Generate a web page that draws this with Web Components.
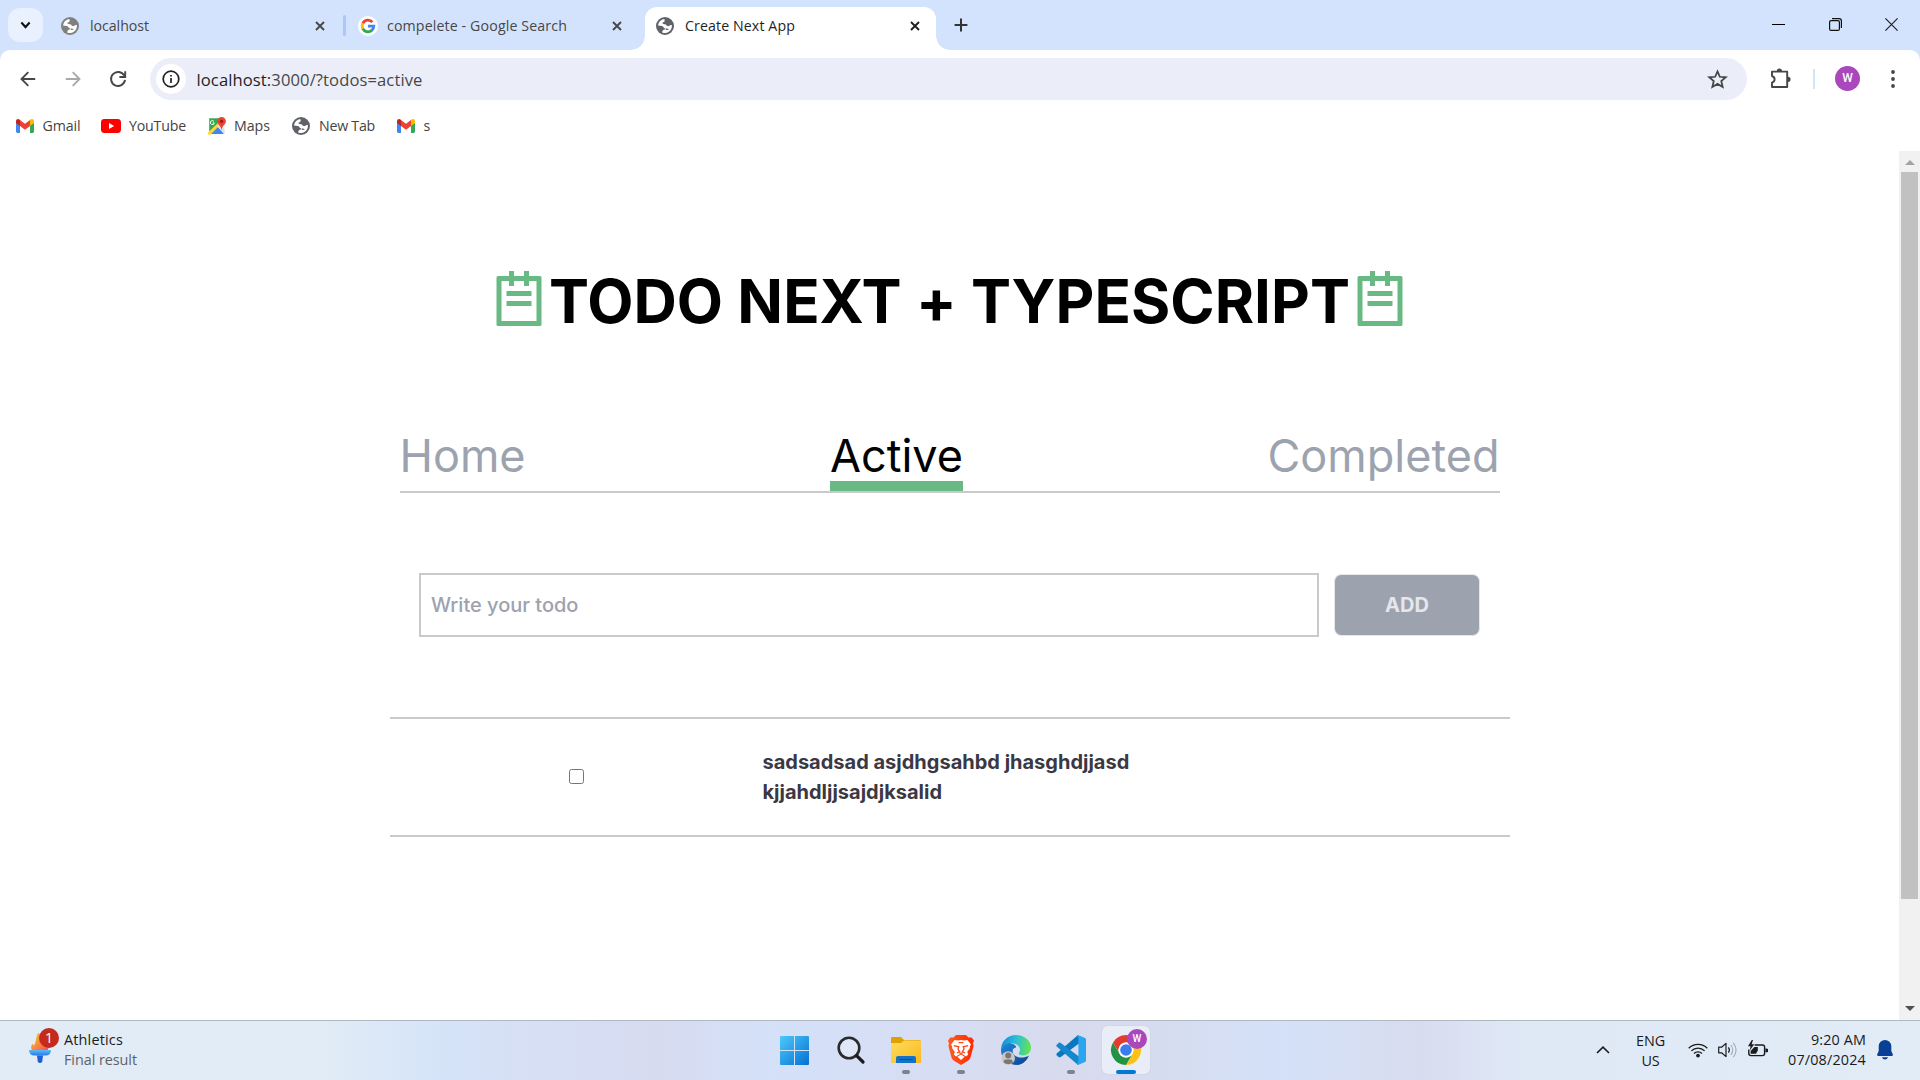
<!DOCTYPE html>
<html lang="en">
<head>
<meta charset="utf-8">
<title>Create Next App</title>
<style>
html,body{margin:0;height:100%;overflow:hidden;background:#fff}
body{font-family:"Open Sans","Noto Sans",sans-serif}
</style>
</head>
<body>
<desktop-screen></desktop-screen>
<script>
const define = (name, css, html, hook) => customElements.define(name, class extends HTMLElement {
  constructor() {
    super();
    const t = document.createElement('template');
    t.innerHTML = `<style>*{box-sizing:border-box}${css}</style>${html}`;
    this.attachShadow({ mode: 'open' }).append(t.content.cloneNode(true));
  }
  connectedCallback() { if (hook) hook(this, this.shadowRoot); }
});

const icons = {
  globe: ['0 0 18 18', '<circle cx="9" cy="9" r="9" fill="currentColor"/><path fill="#fff" d="M8.2 2A7 7 0 0 0 2 8.6C3.4 8.9 4.6 9 5.8 9.1C7.2 9.2 7.4 10.9 8.6 11.2C9.4 11.4 9.5 12.4 8.6 12.6C7.4 12.8 6.4 13.2 6.2 15.4A7 7 0 0 0 15.9 8.2C14.6 7.8 13.6 8.8 12.6 9.1C11.2 9.4 10.7 8.2 9.8 7.4C9 6.8 7.4 7.6 6.6 6.6C6 5.6 7.2 5.2 8 4.9C8.8 4.4 8.9 3 8.2 2z"/><path fill="currentColor" d="M9.6 11.8C10.8 11 12 11.6 13 12.6C11.8 13 10.6 13.2 9.8 12.8z"/>'],
  google: ['0 0 20 20', '<circle cx="10" cy="10" r="10" fill="#fff"/><g fill="none" stroke-width="2.9"><path stroke="#ea4335" d="M14.4 6.1A5.8 5.8 0 0 0 4.8 7.4"/><path stroke="#fbbc05" d="M4.8 7.3A5.8 5.8 0 0 0 4.8 12.7"/><path stroke="#34a853" d="M4.8 12.6A5.8 5.8 0 0 0 13.8 14.4"/><path stroke="#4285f4" d="M10 10.1H15.8A5.8 5.8 0 0 1 13.7 14.5"/></g>'],
  close: ['0 0 10 10', '<path d="M1 1L9 9M9 1L1 9" stroke="currentColor" stroke-width="1.9" fill="none"/>'],
  plus: ['0 0 14 14', '<path d="M7 .6V13.4M.6 7H13.4" stroke="currentColor" stroke-width="2" fill="none"/>'],
  down: ['0 0 12 8', '<path d="M1.5 1.5L6 6L10.5 1.5" stroke="currentColor" stroke-width="2.3" fill="none"/>'],
  min: ['0 0 13 13', '<path d="M0 6.5H13" stroke="#000" stroke-width="1"/>'],
  restore: ['0 0 13 13', '<rect x=".6" y="2.6" width="9.8" height="9.8" rx="1.5" fill="none" stroke="#111" stroke-width="1.2"/><path d="M3 .6H10Q12.4 .6 12.4 3V10" fill="none" stroke="#111" stroke-width="1.2"/>'],
  wclose: ['0 0 13 13', '<path d="M.4 .4L12.6 12.6M12.6 .4L.4 12.6" stroke="#222" stroke-width="1.2"/>'],
  back: ['0 0 16 16', '<path d="M15.2 8H2M8.3 1.2L1.5 8L8.3 14.8" stroke="currentColor" stroke-width="1.9" fill="none"/>'],
  reload: ['0 0 18 18', '<path d="M15.2 5.6A7 7 0 1 0 16 9.9M16.2 1.2V7H10.4" stroke="currentColor" stroke-width="1.9" fill="none"/>'],
  info: ['0 0 18 18', '<circle cx="9" cy="9" r="7.8" stroke="#222" stroke-width="1.7" fill="none"/><path d="M9 8V13M9 4.9V6.6" stroke="#222" stroke-width="1.7"/>'],
  star: ['0 0 20 20', '<path d="M10 2.3L12.2 7.4L17.9 7.9L13.6 11.6L14.9 17.1L10 14.2L5.1 17.1L6.4 11.6L2.1 7.9L7.8 7.4Z" stroke="#444746" stroke-width="1.7" fill="none"/>'],
  puzzle: ['0 0 21 21', '<path d="M2 3.6H17.2V19H2V14.6Q4.6 13.8 4.6 11.3T2 8Z" fill="none" stroke="#444746" stroke-width="1.9" stroke-linejoin="round"/><path d="M6.8 3A2.6 2.6 0 0 1 12 3ZM18 8.7A2.6 2.6 0 0 1 18 13.9Z" fill="#444746"/>'],
  dots: ['0 0 4 18', '<g fill="#444746"><circle cx="2" cy="2" r="1.9"/><circle cx="2" cy="9" r="1.9"/><circle cx="2" cy="16" r="1.9"/></g>'],
  gmail: ['0 0 18 14', '<path fill="#4285f4" d="M0 3V12.6Q0 14 1.4 14H4V6Z"/><path fill="#34a853" d="M14 6V14H16.6Q18 14 18 12.6V3Z"/><path fill="#fbbc04" d="M14 1.8V7L18 4V2.2C18 .2 15.8-.6 14 .8Z"/><path fill="#c5221f" d="M0 2.2V4L4 7V1L3.8 .8C2.2-.6 0 .2 0 2.2Z"/><path fill="#ea4335" d="M4 7V1L9 4.8L14 1V7L9 10.8Z"/>'],
  youtube: ['0 0 20 14', '<rect width="20" height="14" rx="3.4" fill="#f00"/><path d="M8 4L13.2 7L8 10Z" fill="#fff"/>'],
  maps: ['0 0 18 18', '<path d="M1.2 1.2H12V9L1.2 17Z" fill="#34a853"/><path d="M1 17L9.2 9L16 17Z" fill="#4285f4"/><path d="M0 15.6L11 5L13 7L2.6 17.6H0Z" fill="#fdd835"/><path d="M9.2 9.4L12 7L16.6 12V17Z" fill="#e0e0e0"/><path d="M5.9 4.4A2 2 0 1 0 6.3 6H4.6" stroke="#fff" stroke-width="1" fill="none"/><path d="M13.6 0A4.3 4.3 0 0 0 9.3 4.3C9.3 7.6 12.8 8.4 13.6 13C14.4 8.4 17.9 7.6 17.9 4.3A4.3 4.3 0 0 0 13.6 0Z" fill="#ea4335"/><circle cx="13.6" cy="4.2" r="1.5" fill="#8c1a11"/>'],
  note: ['0 0 24 24', '<path fill="#68b984" fill-rule="evenodd" d="M3.6 4H8V2H10V4H14V2H16V4H20.4Q21 4 21 4.6V23.4Q21 24 20.4 24H3.6Q3 24 3 23.4V4.6Q3 4 3.6 4ZM5 6V22H19V6H16V8H14V6H10V8H8V6ZM7 10H17V12H7ZM7 14H17V16H7Z"/>'],
  win: ['0 0 29 29', '<defs><linearGradient id="g" x1="0" y1="0" x2="1" y2="1"><stop stop-color="#4cc9fb"/><stop offset="1" stop-color="#0471d0"/></linearGradient></defs><path fill="url(#g)" d="M1 0H14V14H0V1Q0 0 1 0ZM15 0H28Q29 0 29 1V14H15ZM0 15H14V29H1Q0 29 0 28ZM15 15H29V28Q29 29 28 29H15Z"/>'],
  search: ['0 0 28 28', '<circle cx="12" cy="12" r="10.3" fill="rgba(255,255,255,.25)" stroke="#2b2b2e" stroke-width="2.6"/><path d="M19.6 19.6L26 26" stroke="#1b1b1b" stroke-width="3.2" stroke-linecap="round"/>'],
  folder: ['0 0 30 28', '<defs><linearGradient id="g" x1="0" y1="0" x2="1" y2="1"><stop stop-color="#ffdc60"/><stop offset="1" stop-color="#fbb91c"/></linearGradient></defs><path d="M0 2Q0 1 1 1H10L13 4H28Q30 4 30 6V12H0Z" fill="#dfa000"/><path d="M0 7H10L13 4.6H29Q30 4.6 30 6V26Q30 27 29 27H1Q0 27 0 26Z" fill="url(#g)"/><path d="M5 27V22Q5 20 7 20H23Q25 20 25 22V27Z" fill="#1273c8"/><path d="M9 23.5H21" stroke="#0a4f94" stroke-width="1.2" stroke-linecap="round"/>'],
  brave: ['0 0 26 30', '<defs><linearGradient id="g"><stop stop-color="#ff5a1f"/><stop offset="1" stop-color="#ff2a00"/></linearGradient></defs><path fill="url(#g)" d="M8 0H18L20.5 2.6L23.6 2.4L26 5.6L25 8.4L25.6 11L22.4 22.8Q21.6 24.6 20 25.8L13 30L6 25.8Q4.4 24.6 3.6 22.8L.4 11L1 8.4L0 5.6L2.4 2.4L5.5 2.6Z"/><path fill="#fff" d="M6.6 5L10 5.6L13 5L16 5.6L19.4 5L23 9.6L21.8 11.5L22 13L19.2 17L20.2 19.4L18 21.4L16.2 20.2L13 18.4L9.8 20.2L8 21.4L5.8 19.4L6.8 17L4 13L4.2 11.5L3 9.6Z"/><path fill="#fff" d="M13 19.6L16.6 21.8L13 25L9.4 21.8Z"/><path fill="none" stroke="#ff451a" stroke-width="1.3" d="M5.8 10.6L10.8 11.8L10 14L11.6 16.6L9 18M20.2 10.6L15.2 11.8L16 14L14.4 16.6L17 18M10.6 7.6H15.4M11 17.4L13 18.6L15 17.4"/>'],
  edge: ['0 0 30 30', '<defs><linearGradient id="a" x1="0" y1=".3" x2="1" y2=".4"><stop stop-color="#1689d8"/><stop offset=".5" stop-color="#2cc0d8"/><stop offset="1" stop-color="#66e34f"/></linearGradient><linearGradient id="b" x1="0" y1="0" x2="1" y2="1"><stop stop-color="#1b8ce0"/><stop offset="1" stop-color="#0c3f8c"/></linearGradient></defs><path fill="url(#b)" d="M.2 13C1.8 9 6 7.6 9.6 8.2C13 8.8 15.6 11 15 12.6C11.6 13 11 16 12.2 18.4C14.8 23.2 22.4 23.6 28 20.4C25.4 26.8 20.4 30 15 30A15 15 0 0 1 0 15Z"/><path fill="url(#a)" d="M.2 13C1 5.4 7.2 0 15 0C23.4 0 30 5.8 30 12.6C30 17.4 26.6 20.4 22.4 20.4C19.6 20.4 17.8 19.4 17.8 18.4C17.8 17.6 19 17 19 14.6C19 10.8 14.8 8 9.8 8C5.4 8 1.8 10 .2 13Z"/><circle cx="7.2" cy="23" r="6.8" fill="#c9c7c5"/><circle cx="7.2" cy="20.4" r="3" fill="#7b7775"/><path d="M2.6 27.6Q2.6 24.6 5 24.6H9.4Q11.8 24.6 11.8 27.6Q7.2 31 2.6 27.6Z" fill="#7b7775"/>'],
  code: ['0 0 30 30', '<path fill="#0b77bd" d="M22 0L25 7L4.4 22.2L2.8 22.3L.5 20Q0 19.2 .7 18.4Z"/><path fill="#1587cf" d="M4.4 7.8L25 23L22 30L.7 11.6Q0 10.8 .5 10L2.8 7.8Q3.6 7.3 4.4 7.8Z"/><path fill="#2ba5ee" d="M22 0L29 3Q30 3.5 30 4.6V25.4Q30 26.5 29 27L22 30Q21.3 30 21 29.2L22.4 27V3L21 .8Z"/>'],
  chrome: ['0 0 30 30', '<circle cx="15" cy="15" r="15" fill="#fff"/><path fill="#e33b2e" d="M2 7.5A15 15 0 0 1 28 7.5H15A7.5 7.5 0 0 0 8.5 18.75Z"/><path fill="#fbc116" d="M28 7.5A15 15 0 0 1 15 30L21.5 18.75A7.5 7.5 0 0 0 15 7.5Z"/><path fill="#229342" d="M15 30A15 15 0 0 1 2 7.5L8.5 18.75A7.5 7.5 0 0 0 21.5 18.75Z"/><circle cx="15" cy="15" r="7.4" fill="#fff"/><circle cx="15" cy="15" r="5.8" fill="#3b7ded"/>'],
  torch: ['0 0 22 32', '<defs><linearGradient id="a" x1="0" y1="0" x2="1" y2="1"><stop stop-color="#ffc21a"/><stop offset=".5" stop-color="#fb8d3c"/><stop offset="1" stop-color="#f4456a"/></linearGradient><linearGradient id="b" x1="0" y1="0" x2="0" y2="1"><stop stop-color="#5cc0f7"/><stop offset="1" stop-color="#2a78e8"/></linearGradient></defs><path fill="url(#a)" d="M9 0C14 3 20 7 20 13Q20 16 18.4 18.6H3Q1 15 3.6 11.4L5 13.4C7.4 10 6.6 5 9 0Z"/><path fill="url(#b)" d="M0 18H22Q22 24 16 24H6Q0 24 0 18Z"/><path fill="#1f5fd6" d="M8 24H14L13.2 31Q11 33 8.8 31Z"/>'],
  up: ['0 0 14 8', '<path d="M1 7L7 1.2L13 7" stroke="#1b1b1b" stroke-width="1.6" fill="none"/>'],
  wifi: ['0 0 20 16', '<g fill="none" stroke="#1b1b1b" stroke-width="1.3"><path d="M.7 6.2A13 13 0 0 1 19.3 6.2M3.4 8.9A9.2 9.2 0 0 1 16.6 8.9M6 11.5A5.6 5.6 0 0 1 14 11.5"/></g><circle cx="10" cy="13.6" r="1.9" fill="#1b1b1b"/>'],
  sound: ['0 0 20 16', '<path d="M.7 5.2H3.6L8 1.4V14.6L3.6 10.8H.7Z" fill="none" stroke="#1b1b1b" stroke-width="1.2" stroke-linejoin="round"/><path d="M10.4 5.4Q12.4 8 10.4 10.6" fill="none" stroke="#1b1b1b" stroke-width="1.2"/><path d="M12.8 3Q16.8 8 12.8 13M15.2 .8Q21 8 15.2 15.2" fill="none" stroke="#a3abb5" stroke-width="1.1"/>'],
  battery: ['0 0 20 18', '<path d="M6.6 5H14.4Q16.6 5 16.6 7V13.6Q16.6 15.6 14.4 15.6H3Q.8 15.6 .8 13.6V9.6" fill="none" stroke="#1b1b1b" stroke-width="1.4"/><path d="M17.4 8.2L20 9V12L17.4 12.6Z" fill="#1b1b1b"/><path d="M2.6 13.8V11L6.4 7H9.8V10.6L8 13.8Z" fill="#1b1b1b"/><path d="M3.8 0L0 6.2H2.6L1.8 10.4L6.2 4.2H3.6L5 0Z" fill="#1b1b1b"/>'],
  bell: ['0 0 16 20', '<path fill="#0a3f96" d="M8 0A6.3 6.3 0 0 0 1.7 6.3V11L.1 14.6Q-.2 16 1.2 16H14.8Q16.2 16 15.9 14.6L14.3 11V6.3A6.3 6.3 0 0 0 8 0ZM5 17.2H11Q10.4 19.4 8 19.4T5 17.2Z"/>']
};

define('ui-icon', ':host{display:block;flex:none}svg{display:block;width:100%;height:100%;overflow:visible}', '<svg preserveAspectRatio="none"></svg>', (el, root) => {
  const [box, art] = icons[el.getAttribute('name')];
  const svg = root.querySelector('svg');
  svg.setAttribute('viewBox', box);
  svg.innerHTML = art;
  el.style.width = el.getAttribute('w') + 'px';
  el.style.height = el.getAttribute('h') + 'px';
});

define('browser-tab', `
  :host{display:flex;align-items:center;height:43px;color:#474747;position:relative;font-size:14.2px}
  :host([active]){background:#fff;border-radius:12px 12px 0 0;color:#1f1f1f}
  :host([active])::before,:host([active])::after{content:"";position:absolute;bottom:0;width:14px;height:14px}
  :host([active])::before{left:-14px;background:radial-gradient(circle at 0 0,transparent 13.5px,#fff 14px)}
  :host([active])::after{right:-14px;background:radial-gradient(circle at 100% 0,transparent 13.5px,#fff 14px)}
  ui-icon{margin-left:auto;margin-top:-6px}::slotted(*){margin-top:-6px}`,
  '<slot></slot><ui-icon name="close" w="10" h="10"></ui-icon>');

define('tab-strip', `
  :host{display:flex;height:50px;background:#d3e3fd;padding-top:7px;color:#333}
  .list{width:35px;height:34px;margin:1px 0 0 8px;border-radius:12px;background:#e9f0fe;display:flex;align-items:center;justify-content:center;color:#111}
  .t1{width:264px;margin-left:18px;gap:11px;padding-right:0}
  .sep{width:3px;height:21px;border-radius:2px;background:#a8c7fa;margin:8px 12px 0 18px}
  .t2{width:264px;gap:9px}
  .t3{width:291px;margin-left:23px;padding:0 16px 0 11px;gap:11px}
  .plus{margin:11px 0 0 18px}
  .win{margin-left:auto;display:flex;gap:43px;padding:11px 22px 0 0}
  .win :first-child{margin-right:1px}`,
  `<div class="list"><ui-icon name="down" w="11" h="8"></ui-icon></div>
  <browser-tab class="t1"><ui-icon name="globe" w="18" h="18" style="color:#80807f"></ui-icon><fit-text w="59">localhost</fit-text></browser-tab>
  <div class="sep"></div>
  <browser-tab class="t2"><ui-icon name="google" w="20" h="20"></ui-icon><fit-text w="180">compelete - Google Search</fit-text></browser-tab>
  <browser-tab class="t3" active><ui-icon name="globe" w="18" h="18" style="color:#5f6368"></ui-icon><fit-text w="110">Create Next App</fit-text></browser-tab>
  <ui-icon class="plus" name="plus" w="14" h="14"></ui-icon>
  <div class="win"><ui-icon name="min" w="13" h="13"></ui-icon><ui-icon name="restore" w="13" h="13"></ui-icon><ui-icon name="wclose" w="13" h="13"></ui-icon></div>`);

define('browser-toolbar', `
  :host{display:block;background:#d3e3fd}
  .bar{display:flex;align-items:center;height:58px;background:#fff;border-radius:10px 10px 0 0;padding:0 25px 0 20px;color:#474747}
  .omni{width:1597px;height:42px;border-radius:21px;background:#ebeef8;display:flex;align-items:center;padding:0 19px 0 6px;margin-left:23.5px}
  .info{width:30px;height:30px;border-radius:50%;background:#fff;display:flex;align-items:center;justify-content:center;margin-right:10.5px}
  .url{font-size:16.6px;color:#474747}.url b{font-weight:400;color:#1f1f1f}
  .sep{width:2px;height:20px;background:#d3e3fd;margin:0 20px 0 22px}
  .me{width:25px;height:25px;border-radius:50%;background:#ab47bc;color:#fff;font:500 12px/25px Roboto,sans-serif;text-align:center;margin:-1px 30.5px 0 0}`,
  `<div class="bar"><ui-icon name="back" w="16" h="16"></ui-icon>
  <ui-icon name="back" w="16" h="16" style="margin-left:29px;transform:scaleX(-1);color:#a9a9a9"></ui-icon>
  <ui-icon name="reload" w="18" h="18" style="margin-left:27.5px"></ui-icon>
  <div class="omni"><div class="info"><ui-icon name="info" w="18" h="18"></ui-icon></div><fit-text class="url" w="226"><b>localhost:</b>3000/?todos=active</fit-text><ui-icon name="star" w="21" h="21" style="margin-left:auto"></ui-icon></div>
  <ui-icon name="puzzle" w="21" h="21" style="margin:-1px 0 0 23px"></ui-icon><div class="sep"></div><div class="me">W</div><ui-icon name="dots" w="4" h="18"></ui-icon></div>`);

define('bookmark-link', ':host{display:flex;align-items:center;height:24px;font-size:14.2px;color:#444}::slotted(:last-child){margin-top:-1px}',
  '<slot></slot>');
define('bookmark-bar', ':host{display:flex;background:#fff;height:43px;padding:6px 0 0 16px}bookmark-link{gap:8.5px}',
  `<bookmark-link style="width:85px"><ui-icon name="gmail" w="18" h="14"></ui-icon><fit-text w="38">Gmail</fit-text></bookmark-link>
  <bookmark-link style="width:107px;gap:8px"><ui-icon name="youtube" w="20" h="14"></ui-icon><fit-text w="57">YouTube</fit-text></bookmark-link>
  <bookmark-link style="width:84px;gap:8px"><ui-icon name="maps" w="18" h="18"></ui-icon><fit-text w="36">Maps</fit-text></bookmark-link>
  <bookmark-link style="width:105px;gap:9px"><ui-icon name="globe" w="18" h="18" style="color:#5f6368"></ui-icon><fit-text w="56">New Tab</fit-text></bookmark-link>
  <bookmark-link><ui-icon name="gmail" w="18" h="14"></ui-icon><span>s</span></bookmark-link>`);

define('todo-title', `
  :host{display:flex;justify-content:center;padding-top:115px;font:700 60px/60px Inter,sans-serif;color:#000;height:175px}
  h1{font:inherit;line-height:61px;margin:5px 0 0;white-space:nowrap}`,
  '<ui-icon name="note" w="60" h="60"></ui-icon><h1><fit-text w="801"><slot></slot></fit-text></h1><ui-icon name="note" w="60" h="60"></ui-icon>');

define('todo-nav', `
  :host{display:flex;justify-content:space-between;width:1100px;margin:105px auto 0;border-bottom:2px solid #cacaca;font:400 45px/49px Inter,sans-serif;color:#9ca3af}
  a{height:60px}a.on{color:#000;border-bottom:10px solid #68b984}`,
  '<a><fit-text w="126">Home</fit-text></a><a class="on"><fit-text w="133">Active</fit-text></a><a><fit-text w="232">Completed</fit-text></a>');

define('todo-form', `
  :host{display:flex;align-items:center;width:1061px;margin:80px 0 0 419px;gap:15px;font-family:Inter,sans-serif;font-size:20px}
  .field{flex:1;height:64px;border:2px solid #cacaca;padding:0 10px;display:flex;align-items:center;font-weight:500;color:#9ca3af}
  button{width:146px;height:62px;border:1px solid #e5e7eb;border-radius:7.5px;background:#9ca3af;color:#e5e7eb;font:700 20px/30px Inter,sans-serif;padding:0}`,
  '<div class="field"><fit-text w="147.4">Write your todo</fit-text></div><button>ADD</button>');

define('todo-item', `
  :host{display:flex;align-items:center;width:1120px;height:120px;margin:80px auto 0;border:solid #cacaca;border-width:2px 0;font:700 20px/30px Inter,sans-serif;color:#3a3844}
  input{flex:none;width:15px;height:15px;margin:-1px 179px 0 179px}p{margin:0;width:400px}`,
  '<input type="checkbox"><p><slot></slot></p>');

define('page-scrollbar', `
  :host{display:flex;flex-direction:column;align-items:center;width:21px;background:#f1f1f1;height:869px}
  i{width:0;height:0;border:5px solid transparent}
  .u{border-top:0;border-bottom-color:#a3a3a3;margin-top:9px}.d{border-bottom:0;border-top-color:#505050;margin:auto 0 9px}
  .thumb{width:17px;height:727px;background:#c1c1c1;margin-top:7px}`,
  '<i class="u"></i><div class="thumb"></div><i class="d"></i>');

define('todo-page', ':host{display:flex;background:#fff;height:869px}main{width:1899px}',
  `<main><todo-title>TODO NEXT + TYPESCRIPT</todo-title><todo-nav></todo-nav><todo-form></todo-form>
  <todo-item>sadsadsad asjdhgsahbd jhasghdjjasd kjjahdljjsajdjksalid</todo-item></main><page-scrollbar></page-scrollbar>`);

define('task-app', `
  :host{display:flex;flex-direction:column;align-items:center;justify-content:center;width:55px;height:58px;position:relative}
  :host([running])::after{content:"";position:absolute;top:49px;width:8px;height:4px;border-radius:2px;background:#7d828c}
  :host([active])::after{width:20px;background:#0078d4}
  :host([active])::before{content:"";position:absolute;inset:5px 3.5px;border-radius:5px;background:#e9edf8;box-shadow:0 0 1px #aab}
  ::slotted(*){position:relative}`, '<slot></slot>');

define('task-bar', `
  :host{display:flex;height:60px;border-top:1px solid #b0b8c1;color:#1b1b1b;font-size:14.4px;line-height:20px;
    background:linear-gradient(90deg,#e1ecf6 0,#e1ecf6 320px,#d5e3f9 450px,#d7e0f5 520px,#d6dbf0 660px,#d4e1f9 770px,#d6def5 900px,#d8dbee 1060px,#d6dcf0 1160px,#d4e1f8 1280px,#d8dcef 1420px,#dfe9f6 1520px,#e1ecf6)}
  .news{display:flex;width:768px;padding-left:29px}
  .pic{position:relative;width:22px;margin:12px 13px 0 0}
  .badge{position:absolute;border-radius:50%;width:20px;height:20px;text-align:center;color:#fff;line-height:20px}
  .pic .badge{background:#c42b1c;left:10px;top:-5px;font-size:14px;line-height:19px}
  .two{display:flex;flex-direction:column;padding-top:10px}.news .two{padding-top:9px}
  .apps{display:flex}task-app:first-child{margin:0 1px 0 -1px}
  .tray{display:flex;margin-left:auto;padding-right:27px;align-items:center;height:58px}
  .tray .two{height:58px}`,
  `<div class="news"><div class="pic"><ui-icon name="torch" w="22" h="30"></ui-icon><span class="badge">1</span></div>
  <div class="two"><fit-text w="59">Athletics</fit-text><fit-text w="73" style="color:#5d6268">Final result</fit-text></div></div>
  <div class="apps"><task-app><ui-icon name="win" w="29" h="29"></ui-icon></task-app><task-app><ui-icon name="search" w="28" h="28"></ui-icon></task-app>
  <task-app running><ui-icon name="folder" w="30" h="28"></ui-icon></task-app><task-app running><ui-icon name="brave" w="26" h="30"></ui-icon></task-app>
  <task-app><ui-icon name="edge" w="30" h="30"></ui-icon></task-app><task-app running><ui-icon name="code" w="30" h="30"></ui-icon></task-app>
  <task-app running active><ui-icon name="chrome" w="30" h="30"></ui-icon><span class="badge" style="position:absolute;left:29px;top:8px;background:#ab47bc;font:500 10px/20px Roboto,sans-serif">W</span></task-app></div>
  <div class="tray"><ui-icon name="up" w="14" h="8"></ui-icon>
  <div class="two" style="align-items:center;margin:0 23px 0 26px"><fit-text w="29">ENG</fit-text><fit-text w="18">US</fit-text></div>
  <ui-icon name="wifi" w="20" h="16"></ui-icon><ui-icon name="sound" w="20" h="16" style="margin-left:10px"></ui-icon><ui-icon name="battery" w="20" h="18" style="margin:-3px 0 0 10px"></ui-icon>
  <div class="two" style="align-items:flex-end;margin:0 11px 0 20px;padding-top:9px"><fit-text w="55">9:20 AM</fit-text><fit-text w="78">07/08/2024</fit-text></div>
  <ui-icon name="bell" w="16" h="20"></ui-icon></div>`);

define('desktop-screen', ':host{display:flex;flex-direction:column;width:1920px;height:1080px}',
  '<tab-strip></tab-strip><browser-toolbar></browser-toolbar><bookmark-bar></bookmark-bar><todo-page></todo-page><task-bar></task-bar>');

/* Tracks its text so that the run takes up the width given in w. */
define('fit-text', ':host{display:block;white-space:nowrap;width:max-content;flex:none}', '<slot></slot>', el => {
  const w = +el.getAttribute('w');
  const slot = el.querySelector('slot');
  const text = slot ? slot.assignedNodes().map(n => n.textContent).join('') : el.textContent;
  const own = el.getBoundingClientRect().width;
  el.style.letterSpacing = ((w - own) / text.trim().length).toFixed(3) + 'px';
});
</script>
</body>
</html>
